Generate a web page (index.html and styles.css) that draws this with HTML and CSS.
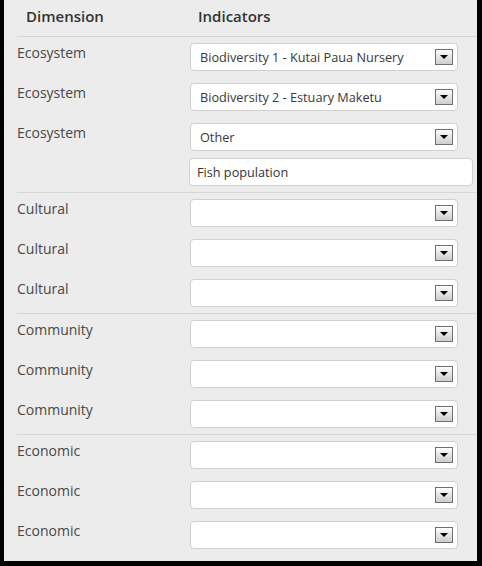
FILE: index.html
```html
<!DOCTYPE html>
<html>
<head>
<meta charset="utf-8">
<link rel="stylesheet" href="styles.css">
</head>
<body>
<div class="frame">
  <div class="table">
    <div class="head">
      <div class="hcell">Dimension</div>
      <div class="hcell hcell2">Indicators</div>
    </div>

    <div class="group">
      <div class="row"><div class="label">Ecosystem</div><div class="select"><span>Biodiversity 1 - Kutai Paua Nursery</span><span class="arrow"></span></div></div>
      <div class="row"><div class="label">Ecosystem</div><div class="select"><span>Biodiversity 2 - Estuary Maketu</span><span class="arrow"></span></div></div>
      <div class="row"><div class="label">Ecosystem</div><div class="select"><span>Other</span><span class="arrow"></span></div></div>
      <div class="row row-input"><div class="label"></div><div class="input">Fish population</div></div>
    </div>

    <div class="group">
      <div class="row"><div class="label">Cultural</div><div class="select"><span></span><span class="arrow"></span></div></div>
      <div class="row"><div class="label">Cultural</div><div class="select"><span></span><span class="arrow"></span></div></div>
      <div class="row"><div class="label">Cultural</div><div class="select"><span></span><span class="arrow"></span></div></div>
    </div>

    <div class="group">
      <div class="row"><div class="label">Community</div><div class="select"><span></span><span class="arrow"></span></div></div>
      <div class="row"><div class="label">Community</div><div class="select"><span></span><span class="arrow"></span></div></div>
      <div class="row"><div class="label">Community</div><div class="select"><span></span><span class="arrow"></span></div></div>
    </div>

    <div class="group">
      <div class="row"><div class="label">Economic</div><div class="select"><span></span><span class="arrow"></span></div></div>
      <div class="row"><div class="label">Economic</div><div class="select"><span></span><span class="arrow"></span></div></div>
      <div class="row"><div class="label">Economic</div><div class="select"><span></span><span class="arrow"></span></div></div>
    </div>
  </div>
</div>
</body>
</html>
```

FILE: styles.css
```css
html, body {
  margin: 0;
  padding: 0;
  background: #000;
}
body {
  width: 482px;
  height: 566px;
  overflow: hidden;
  font-family: "Open Sans", "Liberation Sans", sans-serif;
}
.frame {
  margin: 0 5px 0 4px;
  height: 561px;
  background: #ececec;
  padding-left: 13px;
  box-sizing: border-box;
}
.table {
  display: flex;
  flex-direction: column;
}
.head {
  display: grid;
  grid-template-columns: 181px 1fr;
  height: 36px;
  border-bottom: 1px solid #d6d6d6;
  box-sizing: content-box;
}
.hcell {
  padding: 6px 0 0 9px;
  font-size: 15px;
  line-height: 20px;
  font-weight: 600;
  color: #333;
}
.hcell2 {
  padding-left: 0;
}
.group {
  border-bottom: 1px solid #d6d6d6;
}
.group:last-child {
  border-bottom: none;
}
.row {
  display: grid;
  grid-template-columns: 173px 1fr;
  padding: 6px 0;
  height: 28px;
}
.row-input {
  padding: 1px 0 6px;
}
.label {
  font-size: 14px;
  line-height: 20px;
  color: #484848;
}
.select {
  width: 268px;
  height: 28px;
  box-sizing: border-box;
  background: #fff;
  border: 1px solid #d0d0d0;
  border-radius: 4px;
  display: flex;
  align-items: center;
  justify-content: space-between;
  padding: 0 4px 0 9px;
  font-size: 12.7px;
  color: #383838;
}
.arrow {
  width: 18px;
  height: 16px;
  box-sizing: border-box;
  border: 1px solid #6f6f6f;
  background: linear-gradient(#fdfdfd, #cdcdcd);
  position: relative;
  flex: none;
}
.arrow::after {
  content: "";
  position: absolute;
  left: 4px;
  top: 5px;
  border-left: 4px solid transparent;
  border-right: 4px solid transparent;
  border-top: 4px solid #000;
}
.input {
  margin-left: -1px;
  width: 284px;
  height: 28px;
  box-sizing: border-box;
  background: #fff;
  border: 1px solid #d0d0d0;
  border-radius: 4px;
  padding: 0 7px;
  font-size: 12.7px;
  line-height: 26px;
  color: #333;
}
```
